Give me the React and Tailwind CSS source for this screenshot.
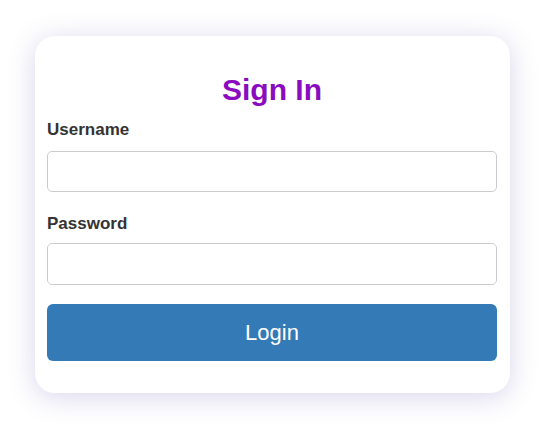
import { useState } from 'react'

export default function App() {
  const [form, setForm] = useState({ username: '', password: '' })

  return (
    <div className="min-h-screen bg-white font-['Liberation_Sans',Arial,sans-serif]">
      <div className="pt-[36px] pl-[35px]">
        {/* Card */}
        <form
          onSubmit={(e) => e.preventDefault()}
          className="w-[475px] bg-white rounded-[20px] shadow-[0_4px_28px_rgba(90,80,170,0.24)] pl-[12px] pr-[13px] pt-[37px] pb-[32px]"
        >
          <h2 className="text-center text-[30px] leading-[34px] font-bold text-[#8a0cbf]">
            Sign In
          </h2>

          <label className="block mt-[13px] mb-[11px] text-[17px] leading-[20px] font-bold text-[#333333]">
            Username
          </label>
          <input
            type="text"
            value={form.username}
            onChange={(e) => setForm({ ...form, username: e.target.value })}
            className="block w-full h-[41px] px-3 border border-[#cccccc] rounded-[5px] bg-white text-[16px] text-[#333] focus:outline-none"
          />

          <label className="block mt-[22px] mb-[9px] text-[17px] leading-[20px] font-bold text-[#333333]">
            Password
          </label>
          <input
            type="password"
            value={form.password}
            onChange={(e) => setForm({ ...form, password: e.target.value })}
            className="block w-full h-[42px] px-3 border border-[#cccccc] rounded-[5px] bg-white text-[16px] text-[#333] focus:outline-none"
          />

          <button
            type="submit"
            className="block w-full h-[57px] mt-[19px] rounded-[6px] bg-[#337ab7] text-white text-[22px] leading-none"
          >
            Login
          </button>
        </form>
      </div>
    </div>
  )
}
